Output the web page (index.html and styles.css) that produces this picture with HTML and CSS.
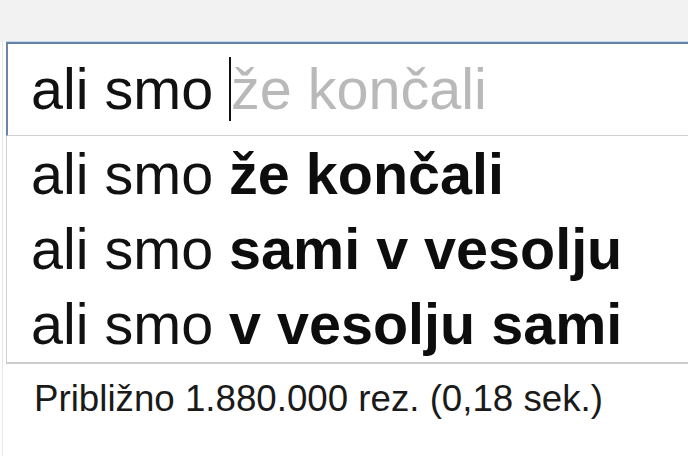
FILE: index.html
```html
<!DOCTYPE html>
<html lang="sl">
<head>
<meta charset="utf-8">
<title>Iskanje</title>
<link rel="stylesheet" href="styles.css">
</head>
<body>
<div class="topbar"></div>
<div class="page">
  <div class="search">
    <div class="query">ali smo <span class="ghost">že končali</span></div>
  </div>
  <ul class="suggestions">
    <li>ali smo <b>že končali</b></li>
    <li>ali smo <b>sami v vesolju</b></li>
    <li>ali smo <b>v vesolju sami</b></li>
  </ul>
  <p class="stats">Približno 1.880.000 rez. (0,18 sek.)</p>
</div>
</body>
</html>
```
FILE: styles.css
```css
html, body {
  margin: 0;
  padding: 0;
  background: #ffffff;
  overflow: hidden;
}
body {
  font-family: "Liberation Sans", Arial, sans-serif;
  color: #111111;
  width: 688px;
  height: 456px;
}
.topbar {
  height: 42px;
  background: #f2f2f2;
}
.page {
  margin-left: 2px;
  border-left: 1px solid #e6e6e6;
  height: 414px;
}
.search {
  margin-left: 3px;
  width: 657px;
  height: 91px;
  border-top: 2px solid #6482a7;
  border-left: 2px solid #6a86a9;
  border-bottom: 1px solid #cfcfcf;
  box-shadow: 0 -1px 0 #c8dbee;
  padding: 0 0 0 23px;
  overflow: hidden;
}
.query {
  font-size: 57.5px;
  line-height: 64px;
  padding-top: 13px;
  white-space: nowrap;
  color: #111111;
}
.ghost {
  color: #b9b9b9;
  border-left: 2px solid #111111;
}
.suggestions {
  list-style: none;
  margin: 0 0 0 3px;
  padding: 1px 0 0 24px;
  width: 657px;
  border-left: 1px solid #cfcfcf;
  border-bottom: 2px solid #cccccc;
  overflow: hidden;
}
.suggestions li {
  font-size: 57.5px;
  line-height: 75px;
  height: 75px;
  white-space: nowrap;
  color: #111111;
}
.suggestions b {
  font-weight: bold;
  color: #0d0d0d;
}
.stats {
  margin: 14px 0 0 0;
  padding-left: 31px;
  font-size: 36.7px;
  line-height: 42px;
  color: #1a1a1a;
  white-space: nowrap;
}
```
